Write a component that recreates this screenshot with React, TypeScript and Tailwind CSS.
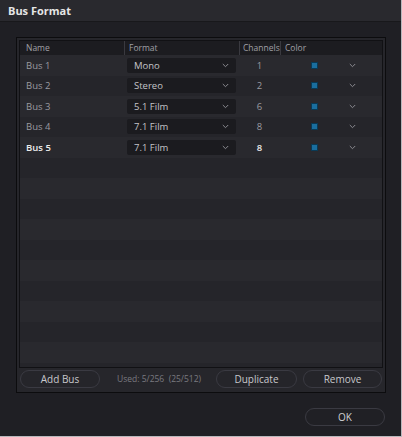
import React from "react";

const rows = [
  { name: "Bus 1", format: "Mono", ch: "1" },
  { name: "Bus 2", format: "Stereo", ch: "2" },
  { name: "Bus 3", format: "5.1 Film", ch: "6" },
  { name: "Bus 4", format: "7.1 Film", ch: "8" },
  { name: "Bus 5", format: "7.1 Film", ch: "8", active: true },
];

const Chevron = ({ className = "" }: { className?: string }) => (
  <svg width="7" height="5" viewBox="0 0 7 5" className={className}>
    <path d="M0.8 1 L3.5 3.7 L6.2 1" fill="none" stroke="#8a8a90" strokeWidth="1" />
  </svg>
);

export default function App() {
  const empties = Array.from({ length: 11 });
  return (
    <div
      className="w-[402px] h-[437px] bg-[#1f1f24] flex flex-col overflow-hidden border-r border-b border-[#b8b8bc]"
      style={{ fontFamily: '"Open Sans", "Noto Sans", sans-serif' }}
    >
      <div className="h-[22px] shrink-0 bg-[#29292e] border-b border-[#18181b] flex items-center pl-[8px]">
        <span className="text-[11px] font-bold text-[#e6e6e6] leading-none">Bus Format</span>
      </div>
      <div className="flex-1 flex flex-col px-[16px] pt-[15px]">
        <div className="w-[370px] h-[356px] border border-[#0c0c0e] bg-[#26262b] flex flex-col p-[2px]">
          <div className="h-[328px] border border-[#111114] bg-[#26262b] flex flex-col overflow-hidden">
            <div className="h-[14px] shrink-0 bg-[#1c1c20] flex items-center text-[8.5px] text-[#a0a0a6] leading-none">
              <div className="w-[104px] pl-[6px]">Name</div>
              <div className="w-[115px] pl-[4px] border-l border-[#3a3a40] h-full flex items-center">Format</div>
              <div className="w-[41px] pl-[3px] border-l border-[#3a3a40] h-full flex items-center">Channels</div>
              <div className="flex-1 pl-[4px] border-l border-[#3a3a40] h-full flex items-center">Color</div>
            </div>
            {rows.map((r, i) => (
              <div
                key={r.name}
                className={`h-[20.5px] shrink-0 flex items-center text-[9.5px] leading-none ${i % 2 === 0 ? "bg-[#29292e]" : "bg-[#25252a]"}`}
              >
                <div className={`w-[104px] pl-[6px] ${r.active ? "text-[#ececec] font-semibold" : "text-[#9a9aa0]"}`}>{r.name}</div>
                <div className="w-[115px] pl-[3px]">
                  <div className="w-[109px] h-[15px] bg-[#1b1b1f] rounded-[2px] flex items-center justify-between pl-[7px] pr-[7px] text-[#c4c4c8]">
                    <span>{r.format}</span>
                    <Chevron />
                  </div>
                </div>
                <div className={`w-[41px] text-center ${r.active ? "text-[#ececec] font-semibold" : "text-[#9a9aa0]"}`}>{r.ch}</div>
                <div className="flex-1 flex items-center">
                  <div className="ml-[31px] w-[7px] h-[7px] bg-[#1a6e9e] border border-[#0a3a55]" />
                  <Chevron className="ml-[31px]" />
                </div>
              </div>
            ))}
            {empties.map((_, i) => (
              <div
                key={i}
                className={`h-[20.5px] shrink-0 ${(i + rows.length) % 2 === 0 ? "bg-[#29292e]" : "bg-[#25252a]"}`}
              />
            ))}
          </div>
          <div className="flex-1 flex items-center">
            <button className="ml-[1px] w-[80px] h-[18px] rounded-full border border-[#3a3a42] bg-[#25252a] text-[10px] text-[#c8c8cc] leading-none">
              Add Bus
            </button>
            <span className="ml-[17px] text-[8.5px] text-[#7a7a80]">Used: 5/256&nbsp; (25/512)</span>
            <button className="ml-auto w-[81px] h-[18px] rounded-full border border-[#3a3a42] bg-[#25252a] text-[10px] text-[#c8c8cc] leading-none">
              Duplicate
            </button>
            <button className="ml-[6px] mr-[1px] w-[79px] h-[18px] rounded-full border border-[#3a3a42] bg-[#25252a] text-[10px] text-[#c8c8cc] leading-none">
              Remove
            </button>
          </div>
        </div>
        <div className="flex justify-end mt-[15px] pr-[0px]">
          <button className="w-[80px] h-[18px] rounded-full border border-[#3a3a42] bg-[#202025] text-[10px] text-[#d0d0d4] leading-none">
            OK
          </button>
        </div>
      </div>
    </div>
  );
}
